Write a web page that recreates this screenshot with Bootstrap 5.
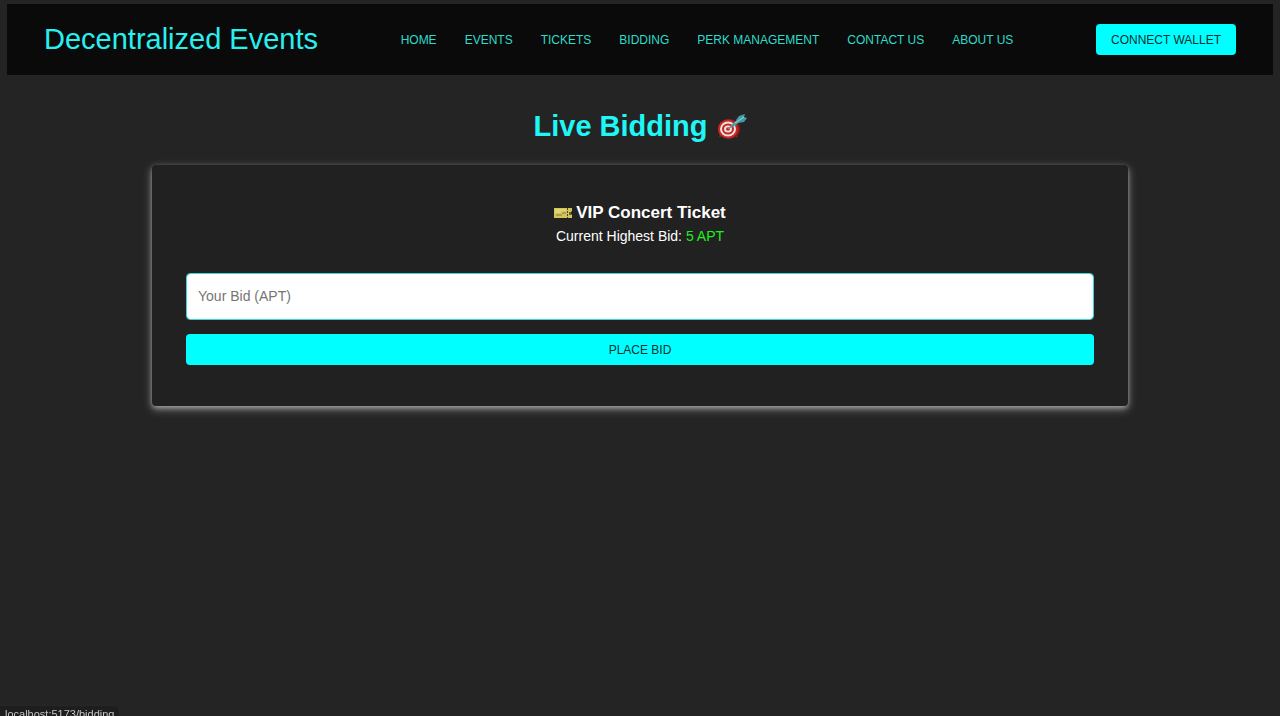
<!DOCTYPE html>
<html lang="en">
<head>
<meta charset="utf-8">
<meta name="viewport" content="width=device-width, initial-scale=1">
<title>Decentralized Events</title>
<link href="https://cdn.jsdelivr.net/npm/bootstrap@5.3.0/dist/css/bootstrap.min.css" rel="stylesheet">
<style>
  body { background: #242424; color: #fff; font-family: "Liberation Sans", Arial, sans-serif; font-size: 14px; line-height: 20px; padding: 4px 7px; }
  .site-bar { background: #0a0a0a; padding: 20px 37px; }
  .site-brand { color: #29f0f0; font-size: 29px; line-height: 31px; }
  .site-brand:hover { color: #0ff; }
  .site-links { gap: 28px; font-size: 12px; }
  .site-links .nav-link { color: #2ddccb; padding: 0; text-transform: uppercase; }
  .site-links .nav-link:hover { color: #0ff; }
  .btn-cyan { --bs-btn-bg: #0ff; --bs-btn-color: #062f2f; --bs-btn-hover-bg: #0dd; --bs-btn-hover-color: #000; --bs-btn-active-bg: #0cc; border: 0; border-radius: 4px; font-size: 12px; line-height: 19px; padding: 7px 15px 5px; text-transform: uppercase; }
  .page-title { color: #1ff6f6; font-size: 29px; line-height: 36px; gap: 9px; margin: 33px 0 21px; }
  .bid-wrap { max-width: 976px; }
  .bid-panel { background: #212121; border-radius: 4px; padding: 34px; padding-bottom: 41px; box-shadow: 0 2px 4px 0 rgba(255,255,255,.34), 0 3px 10px 0 rgba(255,255,255,.42); }
  .ticket-name { font-size: 17px; line-height: 27px; gap: 4px; }
  .bid-value { color: #1df01d; }
  .bid-field, .bid-field:focus { border: 1px solid #3cd6d6; border-radius: 4px; color: #222; font-size: 14px; line-height: 21px; padding: 12px 11px; margin: 27px 0 14px; }
  .bid-field { background-color: #fff; background-clip: padding-box; }
  .bid-field::placeholder { color: #757575; }
  .link-status { background: #1e1e1e; color: #c4c4c4; font-size: 11px; line-height: 16px; height: 10px; padding: 0 5px; border-radius: 0 4px 0 0; box-shadow: 0 0 2px #333; }
</style>
</head>
<body class="min-vh-100">
<header>
  <nav class="site-bar d-flex flex-wrap align-items-center justify-content-between" aria-label="Main">
    <a class="site-brand text-decoration-none" href="#">Decentralized Events</a>
    <ul class="site-links nav">
      <li class="nav-item"><a class="nav-link" href="#">Home</a></li>
      <li class="nav-item"><a class="nav-link" href="#">Events</a></li>
      <li class="nav-item"><a class="nav-link" href="#">Tickets</a></li>
      <li class="nav-item"><a class="nav-link" href="#">Bidding</a></li>
      <li class="nav-item"><a class="nav-link" href="#">Perk Management</a></li>
      <li class="nav-item"><a class="nav-link" href="#">Contact Us</a></li>
      <li class="nav-item"><a class="nav-link" href="#">About Us</a></li>
    </ul>
    <button class="btn btn-cyan" type="button">Connect Wallet</button>
  </nav>
</header>

<main class="bid-wrap mx-auto pb-4">
  <h1 class="page-title d-flex align-items-center justify-content-center fw-bold">
    Live Bidding
    <svg width="30" height="28" viewBox="0 0 30 28" role="img" aria-label="Target">
      <path d="M4 22 3 25M18 22l2 3" stroke="#7d2a22" stroke-width="2"/>
      <ellipse cx="12" cy="17" rx="11" ry="10" fill="#8f1a18"/>
      <ellipse cx="11" cy="17" rx="10" ry="9.500" fill="#c32a26"/>
      <ellipse cx="11" cy="17" rx="8" ry="7.500" fill="#f0e2dc"/>
      <ellipse cx="11" cy="17" rx="6" ry="5.500" fill="#c42724"/>
      <ellipse cx="11" cy="17" rx="4" ry="3.500" fill="#f0e2dc"/>
      <ellipse cx="11" cy="17" rx="2" ry="1.700" fill="#c42724"/>
      <path d="M11 17 20 10" stroke="#6d8f94" stroke-width="1.500"/>
      <path d="M14 13 21 7l3 2-8 6z" fill="#4a9ea6"/>
      <path d="M19 8 22 4l6-2-1 3 3 1-3 4-6 1z" fill="#439da7"/>
      <path d="m18 11 9-6" stroke="#9adad9"/>
    </svg>
  </h1>

  <section class="bid-panel">
    <div class="text-center">
      <h2 class="ticket-name d-flex align-items-center justify-content-center fw-bold mb-0">
        <svg width="18" height="12" viewBox="0 0 18 12" role="img" aria-label="Ticket">
          <path d="M0 1h18v3l-1 1v2l1 1v3H0z" fill="#d3c45c"/>
          <path d="M1 3h11M1 5h6" stroke="#efe48f"/>
          <path d="M2 8h6M8 6h4" stroke="#8b7d31"/>
          <path d="M13.500 1v10" stroke="#4c451f" stroke-dasharray="2 1"/>
          <path d="M15 5h2v3h-2z" fill="#6f6428"/>
        </svg>
        VIP Concert Ticket
      </h2>
      <p class="mb-0">Current Highest Bid: <span class="bid-value">5 APT</span></p>
    </div>
    <form>
      <input class="bid-field form-control" id="bid" type="text" inputmode="decimal" aria-label="Your Bid (APT)" placeholder="Your Bid (APT)">
      <button class="btn btn-cyan w-100" type="button">Place Bid</button>
    </form>
  </section>
</main>

<div class="link-status position-fixed bottom-0 start-0 overflow-hidden">localhost:5173/bidding</div>
<script src="https://cdn.jsdelivr.net/npm/bootstrap@5.3.0/dist/js/bootstrap.bundle.min.js"></script>
</body>
</html>
